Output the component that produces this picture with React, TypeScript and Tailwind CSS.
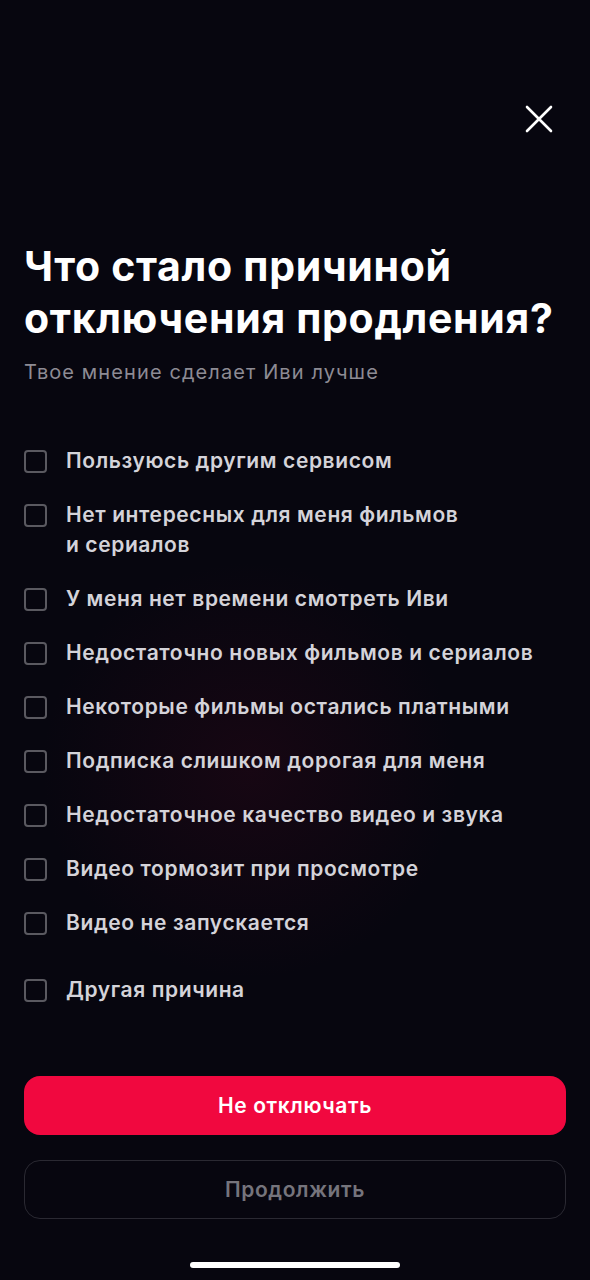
import { useState } from 'react';

const reasons = [
  'Пользуюсь другим сервисом',
  'Нет интересных для меня фильмов\nи сериалов',
  'У меня нет времени смотреть Иви',
  'Недостаточно новых фильмов и сериалов',
  'Некоторые фильмы остались платными',
  'Подписка слишком дорогая для меня',
  'Недостаточное качество видео и звука',
  'Видео тормозит при просмотре',
  'Видео не запускается',
];

function Checkbox({ checked }: { checked: boolean }) {
  return (
    <span
      className={`mt-[4px] flex h-[23px] w-[23px] shrink-0 items-center justify-center rounded-[4px] border-2 ${
        checked ? 'border-[#f1083f] bg-[#f1083f]' : 'border-[#5a5960]'
      }`}
    >
      {checked && (
        <svg viewBox="0 0 16 16" className="h-3.5 w-3.5" fill="none" stroke="white" strokeWidth="2.4">
          <path d="M3 8.5l3.2 3L13 4.5" strokeLinecap="round" strokeLinejoin="round" />
        </svg>
      )}
    </span>
  );
}

function ReasonRow({ label, checked, onToggle }: { label: string; checked: boolean; onToggle: () => void }) {
  return (
    <button onClick={onToggle} className="flex items-start gap-[19px] text-left">
      <Checkbox checked={checked} />
      <span className="whitespace-pre-line text-[21px] font-semibold leading-[30px] tracking-[0.6px] text-[#d4d3d9]">
        {label}
      </span>
    </button>
  );
}

export default function App() {
  const [selected, setSelected] = useState<string[]>([]);

  const toggle = (r: string) =>
    setSelected((s) => (s.includes(r) ? s.filter((x) => x !== r) : [...s, r]));

  return (
    <div
      className="relative flex h-[1280px] w-full flex-col overflow-hidden bg-[#07060f] px-6"
      style={{ fontFamily: 'Inter, "Noto Sans", sans-serif' }}
    >
      {/* faint glow behind the list */}
      <div className="pointer-events-none absolute left-[40px] top-[560px] h-[420px] w-[420px] rounded-full bg-[radial-gradient(circle,rgba(60,8,28,0.3)_0%,rgba(7,6,15,0)_70%)]" />

      {/* close */}
      <div className="flex justify-end pt-[104px]">
        <button className="mr-[12px] h-[30px] w-[30px] text-white">
          <svg viewBox="0 0 30 30" className="h-full w-full" fill="none" stroke="currentColor" strokeWidth="2.6" strokeLinecap="round">
            <path d="M3 3l24 24M27 3L3 27" />
          </svg>
        </button>
      </div>

      <h1 className="relative mt-[106px] text-[41px] font-bold leading-[52px] tracking-[0.7px] text-white">
        Что стало причиной
        <br />
        отключения продления?
      </h1>
      <p className="relative mt-[14px] text-[20px] leading-[28px] tracking-[1.1px] text-[#8d8b94]">
        Твое мнение сделает Иви лучше
      </p>

      <div className="relative mt-[60px] flex flex-col gap-[24px]">
        {reasons.map((r) => (
          <ReasonRow key={r} label={r} checked={selected.includes(r)} onToggle={() => toggle(r)} />
        ))}
        <div className="mt-[13px]">
          <ReasonRow
            label="Другая причина"
            checked={selected.includes('other')}
            onToggle={() => toggle('other')}
          />
        </div>
      </div>

      <div className="relative mt-auto flex flex-col gap-[25px] pb-[61px]">
        <button className="h-[59px] w-full rounded-[16px] bg-[#f1083f] text-[21px] font-semibold tracking-[0.6px] text-white">
          Не отключать
        </button>
        <button className="h-[59px] w-full rounded-[16px] border border-[#2a2932] text-[21px] font-semibold tracking-[0.6px] text-[#75747c]">
          Продолжить
        </button>
      </div>

      {/* home indicator */}
      <div className="absolute bottom-[12px] left-1/2 h-[6px] w-[210px] -translate-x-1/2 rounded-full bg-white" />
    </div>
  );
}
